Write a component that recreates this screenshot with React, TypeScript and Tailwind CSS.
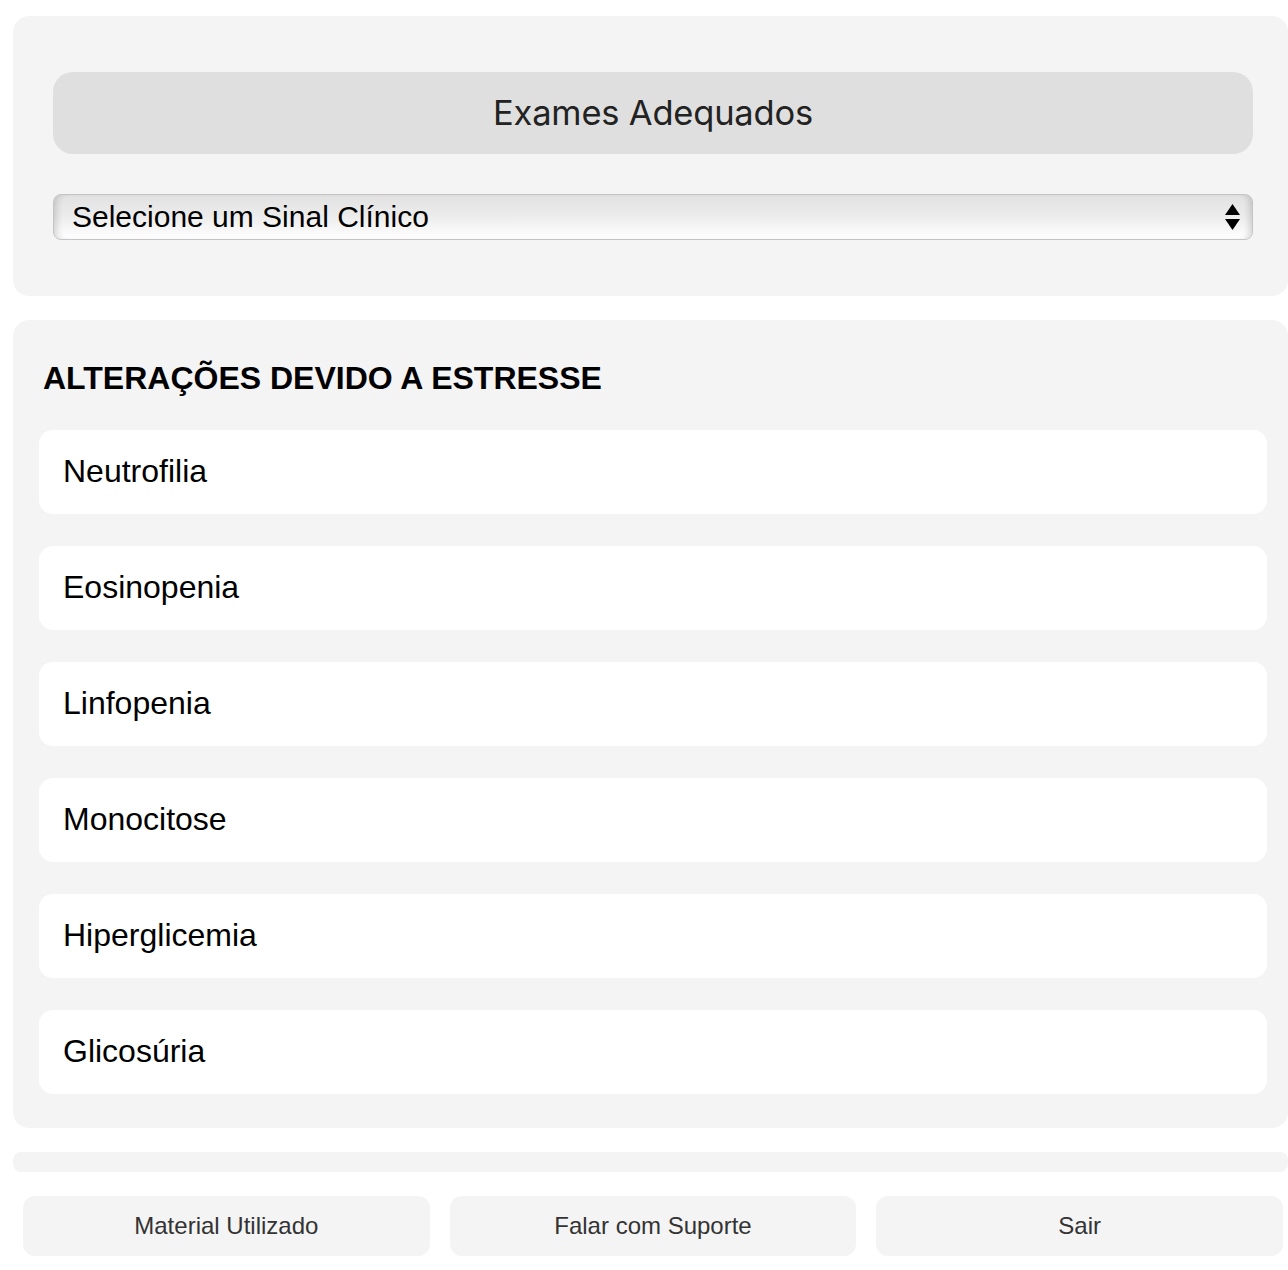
const sinais = ["Neutrofilia", "Eosinopenia", "Linfopenia", "Monocitose", "Hiperglicemia", "Glicosúria"];

const footerLinks = ["Material Utilizado", "Falar com Suporte", "Sair"];

export default function App() {
  return (
    <div className="min-h-screen bg-white font-['Liberation_Sans',Arial,sans-serif] text-black">
      <div className="ml-[13px] pt-4 flex flex-col gap-6">
        {/* cabeçalho com seletor */}
        <section className="bg-[#f4f4f4] rounded-2xl pl-10 pr-[35px] pt-14 pb-14">
          <div className="h-[82px] rounded-[20px] bg-[#dfdfdf] flex items-center justify-center">
            <h1 className="font-['Inter',sans-serif] text-[34.5px] text-[#222] tracking-[-0.2px]">Exames Adequados</h1>
          </div>
          <div className="relative mt-10">
            <select
              defaultValue=""
              className="appearance-none w-full h-[46px] rounded-[8px] border border-[#c4c4c4] bg-[linear-gradient(to_bottom,#e2e2e2_0%,#ebebeb_45%,#ffffff_100%)] shadow-[inset_7px_0_6px_-4px_rgba(0,0,0,0.14),inset_-7px_0_6px_-4px_rgba(0,0,0,0.14)] pl-[18px] pr-10 text-[30px] leading-[44px] text-black outline-none"
            >
              <option value="">Selecione um Sinal Clínico</option>
            </select>
            <div className="pointer-events-none absolute right-[13px] top-1/2 -translate-y-1/2 flex flex-col items-center gap-[4px]">
              <svg width="15" height="11" viewBox="0 0 15 11">
                <path d="M7.5 0 L15 11 L0 11 Z" fill="#000" />
              </svg>
              <svg width="15" height="11" viewBox="0 0 15 11">
                <path d="M0 0 L15 0 L7.5 11 Z" fill="#000" />
              </svg>
            </div>
          </div>
        </section>

        {/* lista de alterações */}
        <section className="bg-[#f4f4f4] rounded-2xl pl-[26px] pr-[21px] pt-10 pb-[34px]">
          <h2 className="pl-1 text-[32px] leading-9 font-bold mb-[34px]">ALTERAÇÕES DEVIDO A ESTRESSE</h2>
          <ul className="flex flex-col gap-8">
            {sinais.map((s) => (
              <li key={s} className="h-[84px] bg-white rounded-[14px] pl-6 pb-0.5 flex items-center text-[32px]">
                {s}
              </li>
            ))}
          </ul>
        </section>

        <div className="h-5 bg-[#f4f4f4] rounded-lg" />
      </div>

      <nav className="mt-6 ml-[23px] mr-[5px] grid grid-cols-3 gap-5">
        {footerLinks.map((l) => (
          <button key={l} className="h-[60px] rounded-xl bg-[#f4f4f4] text-[24px] text-[#333]">
            {l}
          </button>
        ))}
      </nav>
    </div>
  );
}
